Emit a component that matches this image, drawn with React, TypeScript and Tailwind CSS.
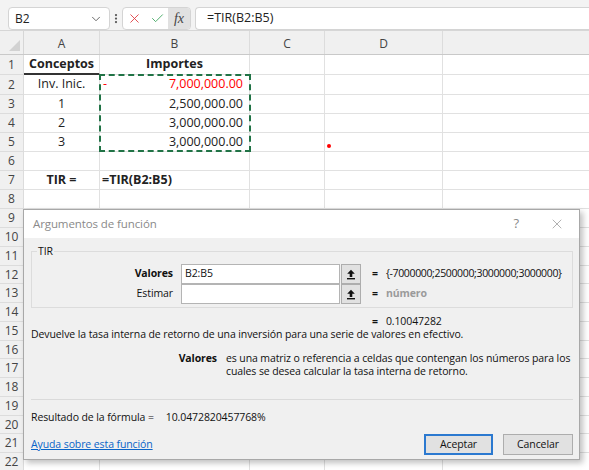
import { ChevronDown, EllipsisVertical, X, Check } from "lucide-react";

type Row = {
  n: number;
  h: string;
  a?: React.ReactNode;
  b?: React.ReactNode;
  aBorder?: boolean;
};

const rows: Row[] = [
  { n: 1, h: "h-[20px]", a: <b>Conceptos</b>, b: <b>Importes</b>, aBorder: true },
  {
    n: 2,
    h: "h-[20px]",
    a: "Inv. Inic.",
    b: (
      <div className="flex w-full justify-between pl-[3px] pr-[6px] text-[#ff0000]">
        <span>-</span>
        <span>7,000,000.00</span>
      </div>
    ),
  },
  { n: 3, h: "h-[19px]", a: "1", b: <div className="w-full pr-[6px] text-right">2,500,000.00</div> },
  { n: 4, h: "h-[19px]", a: "2", b: <div className="w-full pr-[6px] text-right">3,000,000.00</div> },
  { n: 5, h: "h-[19px]", a: "3", b: <div className="w-full pr-[6px] text-right">3,000,000.00</div> },
  { n: 6, h: "h-[19px]" },
  { n: 7, h: "h-[19px]", a: <b>TIR =</b>, b: <b className="w-full pl-[2px] text-left">=TIR(B2:B5)</b> },
];
// rows further down are a touch shorter on screen
for (let i = 8; i <= 22; i++) rows.push({ n: i, h: i === 12 || i === 16 || i === 20 ? "h-[18px]" : "h-[19px]" });

function UploadBtn() {
  return (
    <div className="ml-[1px] flex h-[20px] w-[20px] shrink-0 items-center justify-center border border-[#adadad] bg-[#e1e1e1]">
      <svg width="10" height="11" viewBox="0 0 10 11">
        <path d="M5 0.8 L1.2 4.8 H3.7 V8 H6.3 V4.8 H8.8 Z" fill="#111" />
        <rect x="1" y="9" width="8" height="1.4" fill="#111" />
      </svg>
    </div>
  );
}

export default function App() {
  return (
    <div className="relative h-[470px] w-[589px] overflow-hidden bg-white font-['Open_Sans',sans-serif] text-[#222]">
      {/* Formula bar */}
      <div className="flex h-[31px] items-start border-b border-[#d6d6d6] bg-[#f3f3f3] pt-[7px]">
        <div className="ml-[8px] flex h-[23px] w-[102px] items-center justify-between rounded-[4px] border border-[#d4d4d4] bg-white pl-[6px] pr-[6px] text-[12px]">
          <span>B2</span>
          <ChevronDown size={14} strokeWidth={1.5} className="text-[#555]" />
        </div>
        <div className="flex h-[23px] w-[12px] items-center justify-center">
          <EllipsisVertical size={13} strokeWidth={2.5} className="text-[#555]" />
        </div>
        <div className="flex h-[23px] w-[69px] items-center overflow-hidden rounded-[4px] border border-[#d4d4d4] bg-white">
          <div className="flex w-[23px] justify-center">
            <X size={15} strokeWidth={1.4} className="text-[#e0393e]" />
          </div>
          <div className="flex w-[22px] justify-center">
            <Check size={15} strokeWidth={1.4} className="text-[#3aa55c]" />
          </div>
          <div className="flex h-full flex-1 items-center justify-center bg-[#e1e1e1] font-['Liberation_Serif',serif] text-[14px] italic text-[#444]">
            fx
          </div>
        </div>
        <div className="ml-[4px] flex h-[23px] flex-1 items-center rounded-l-[4px] border border-r-0 border-[#d4d4d4] bg-white pl-[11px] text-[12.5px]">
          =TIR(B2:B5)
        </div>
      </div>

      {/* Column headers */}
      <div className="flex h-[24px] border-b border-[#c9c9c9] bg-[#f0f0f0] text-[12px] text-[#444]">
        <div className="relative w-[24px] border-r border-[#d6d6d6]">
          <svg className="absolute bottom-[3px] right-[3px]" width="11" height="11" viewBox="0 0 11 11">
            <path d="M11 0 V11 H0 Z" fill="#d2d2d2" />
          </svg>
        </div>
        <div className="flex w-[76px] items-center justify-center border-r border-[#dcdcdc] pt-[2px]">A</div>
        <div className="flex w-[150px] items-center justify-center border-r border-[#dcdcdc] pt-[2px]">B</div>
        <div className="flex w-[75px] items-center justify-center border-r border-[#dcdcdc] pt-[2px]">C</div>
        <div className="flex w-[118px] items-center justify-center border-r border-[#dcdcdc] pt-[2px]">D</div>
        <div className="flex-1" />
      </div>

      {/* Rows */}
      <div className="text-[12.5px]">
        {rows.map((r) => (
          <div key={r.n} className={`flex ${r.h}`}>
            <div className="flex w-[24px] items-center justify-center border-b border-r border-[#dcdcdc] bg-[#f0f0f0] text-[12px] text-[#444]">
              {r.n}
            </div>
            <div
              className={`flex w-[76px] items-center justify-center border-r border-[#e1e1e1] ${
                r.aBorder ? "border-b-2 border-b-[#333]" : "border-b border-b-[#e1e1e1]"
              }`}
            >
              {r.a}
            </div>
            <div className="flex w-[150px] items-center justify-center border-b border-r border-[#e1e1e1]">{r.b}</div>
            <div className="w-[75px] border-b border-r border-[#e1e1e1]" />
            <div className="w-[118px] border-b border-r border-[#e1e1e1]" />
            <div className="flex-1 border-b border-[#e1e1e1]" />
          </div>
        ))}
      </div>

      {/* Copy selection marching ants */}
      <div className="pointer-events-none absolute left-[99px] top-[74px] h-[78px] w-[152px] border-2 border-dashed border-[#217346]" />
      {/* Stray red dot */}
      <div className="absolute left-[327px] top-[144px] h-[4px] w-[4px] rounded-full bg-[#ff0000]" />

      {/* Dialog */}
      <div className="absolute left-[23px] top-[209px] flex h-[251px] w-[557px] flex-col border border-[#a8a8a8] bg-[#f0f0f0] text-[10.5px] tracking-[-0.1px] text-[#111] shadow-[3px_3px_6px_rgba(0,0,0,0.25)]">
        <div className="flex h-[28px] shrink-0 items-center justify-between bg-white pl-[9px] pr-[14px]">
          <span className="text-[11.5px] text-[#8a8a8a]">Argumentos de función</span>
          <div className="flex items-center gap-[30px] text-[#8a8a8a]">
            <span className="text-[13px]">?</span>
            <X size={16} strokeWidth={1} />
          </div>
        </div>

        <div className="flex flex-1 flex-col pl-[7px] pr-[6px]">
          {/* Group box */}
          <div className="relative mt-[13px] h-[57px] shrink-0 border border-[#dcdcdc]">
            <span className="absolute -top-[8px] left-[5px] bg-[#f0f0f0] px-[1px] leading-[14px]">TIR</span>
            <div className="mt-[12px] flex items-center">
              <div className="w-[141px] shrink-0 text-right font-bold">Valores</div>
              <div className="ml-[8px] flex h-[20px] w-[159px] shrink-0 items-center border border-[#b4b4b4] bg-white pl-[3px]">
                B2:B5
              </div>
              <UploadBtn />
              <span className="ml-[11px] font-bold">=</span>
              <span className="ml-[8px] whitespace-nowrap tracking-[-0.35px]">{"{-7000000;2500000;3000000;3000000}"}</span>
            </div>
            <div className="flex items-center">
              <div className="w-[141px] shrink-0 text-right">Estimar</div>
              <div className="ml-[8px] h-[20px] w-[159px] shrink-0 border border-[#b4b4b4] bg-white" />
              <UploadBtn />
              <span className="ml-[11px] font-bold">=</span>
              <span className="ml-[8px] font-bold text-[#9a9a9a]">número</span>
            </div>
          </div>

          <div className="mt-[7px] flex h-[13px] shrink-0 items-center pl-[341px] leading-[13px]">
            <span className="font-bold">=</span>
            <span className="ml-[8px]">0.10047282</span>
          </div>
          <div className="h-[13px] shrink-0 whitespace-nowrap leading-[13px]">
            Devuelve la tasa interna de retorno de una inversión para una serie de valores en efectivo.
          </div>

          <div className="mt-[11px] flex shrink-0 leading-[13px]">
            <div className="w-[186px] shrink-0 text-right font-bold">Valores</div>
            <div className="ml-[9px] flex-1 whitespace-nowrap">
              <div>es una matriz o referencia a celdas que contengan los números para los</div>
              <div>cuales se desea calcular la tasa interna de retorno.</div>
            </div>
          </div>

          <div className="mt-[21px] shrink-0 border-t border-[#dadada]" />

          <div className="mt-[11px] flex h-[13px] shrink-0 items-center leading-[13px]">
            <span>Resultado de la fórmula =</span>
            <span className="ml-[12px]">10.0472820457768%</span>
          </div>

          <div className="mt-[10px] flex shrink-0 items-center justify-between">
            <span className="text-[#0a64c8] underline">Ayuda sobre esta función</span>
            <div className="flex gap-[10px]">
              <button className="flex h-[21px] w-[69px] items-center justify-center border-2 border-[#2b79d0] bg-[#e1e1e1]">
                Aceptar
              </button>
              <button className="flex h-[21px] w-[70px] items-center justify-center border border-[#adadad] bg-[#e1e1e1]">
                Cancelar
              </button>
            </div>
          </div>
        </div>
      </div>
    </div>
  );
}
